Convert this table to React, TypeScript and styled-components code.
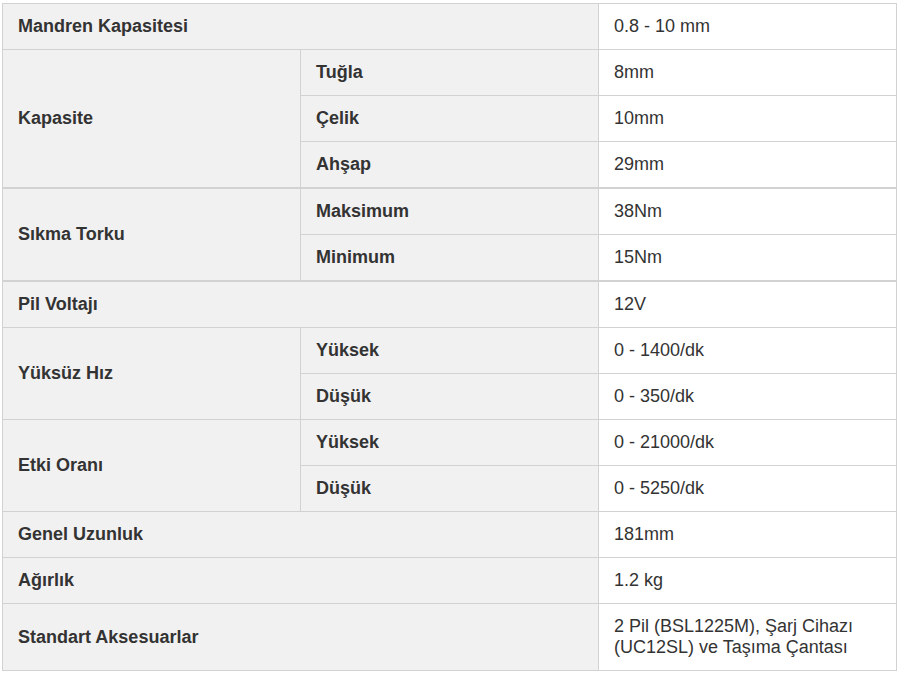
import styled, { createGlobalStyle } from "styled-components";

const GlobalStyle = createGlobalStyle`
  body {
    margin: 0;
    background: #ffffff;
    font-family: "Liberation Sans", Arial, sans-serif;
  }
`;

const Wrapper = styled.div`
  padding: 3px 0 0 2px;
`;

const Table = styled.table`
  width: 894px;
  border-collapse: collapse;
  table-layout: fixed;
  font-size: 18px;
  line-height: 21px;
  color: #333333;
  border: 1px solid #d2d2d2;
`;

const Row = styled.tr<{ $groupStart?: boolean }>`
  border-top: ${(p) => (p.$groupStart ? "2px" : "1px")} solid #d2d2d2;
`;

const Cell = styled.td<{ $label?: boolean }>`
  padding: 12px 15px 12px 15px;
  border: 1px solid #d2d2d2;
  background: ${(p) => (p.$label ? "#f1f1f1" : "#ffffff")};
  font-weight: ${(p) => (p.$label ? 700 : 400)};
  vertical-align: middle;
`;

type Spec = {
  label: string;
  subs?: { name: string; value: string }[];
  value?: string;
  thick?: boolean;
};

const specs: Spec[] = [
  { label: "Mandren Kapasitesi", value: "0.8 - 10 mm" },
  {
    label: "Kapasite",
    subs: [
      { name: "Tuğla", value: "8mm" },
      { name: "Çelik", value: "10mm" },
      { name: "Ahşap", value: "29mm" },
    ],
  },
  {
    label: "Sıkma Torku",
    thick: true,
    subs: [
      { name: "Maksimum", value: "38Nm" },
      { name: "Minimum", value: "15Nm" },
    ],
  },
  { label: "Pil Voltajı", value: "12V", thick: true },
  {
    label: "Yüksüz Hız",
    subs: [
      { name: "Yüksek", value: "0 - 1400/dk" },
      { name: "Düşük", value: "0 - 350/dk" },
    ],
  },
  {
    label: "Etki Oranı",
    subs: [
      { name: "Yüksek", value: "0 - 21000/dk" },
      { name: "Düşük", value: "0 - 5250/dk" },
    ],
  },
  { label: "Genel Uzunluk", value: "181mm" },
  { label: "Ağırlık", value: "1.2 kg" },
  {
    label: "Standart Aksesuarlar",
    value: "2 Pil (BSL1225M), Şarj Cihazı (UC12SL) ve Taşıma Çantası",
  },
];

function App() {
  return (
    <Wrapper>
      <GlobalStyle />
      <Table>
        <colgroup>
          <col style={{ width: "298px" }} />
          <col style={{ width: "298px" }} />
          <col style={{ width: "298px" }} />
        </colgroup>
        <tbody>
          {specs.map((spec) =>
            spec.subs ? (
              spec.subs.map((sub, i) => (
                <Row key={spec.label + sub.name} $groupStart={i === 0 && spec.thick}>
                  {i === 0 && (
                    <Cell $label rowSpan={spec.subs!.length}>
                      {spec.label}
                    </Cell>
                  )}
                  <Cell $label>{sub.name}</Cell>
                  <Cell>{sub.value}</Cell>
                </Row>
              ))
            ) : (
              <Row key={spec.label} $groupStart={spec.thick}>
                <Cell $label colSpan={2}>
                  {spec.label}
                </Cell>
                <Cell>{spec.value}</Cell>
              </Row>
            )
          )}
        </tbody>
      </Table>
    </Wrapper>
  );
}

export default App;
